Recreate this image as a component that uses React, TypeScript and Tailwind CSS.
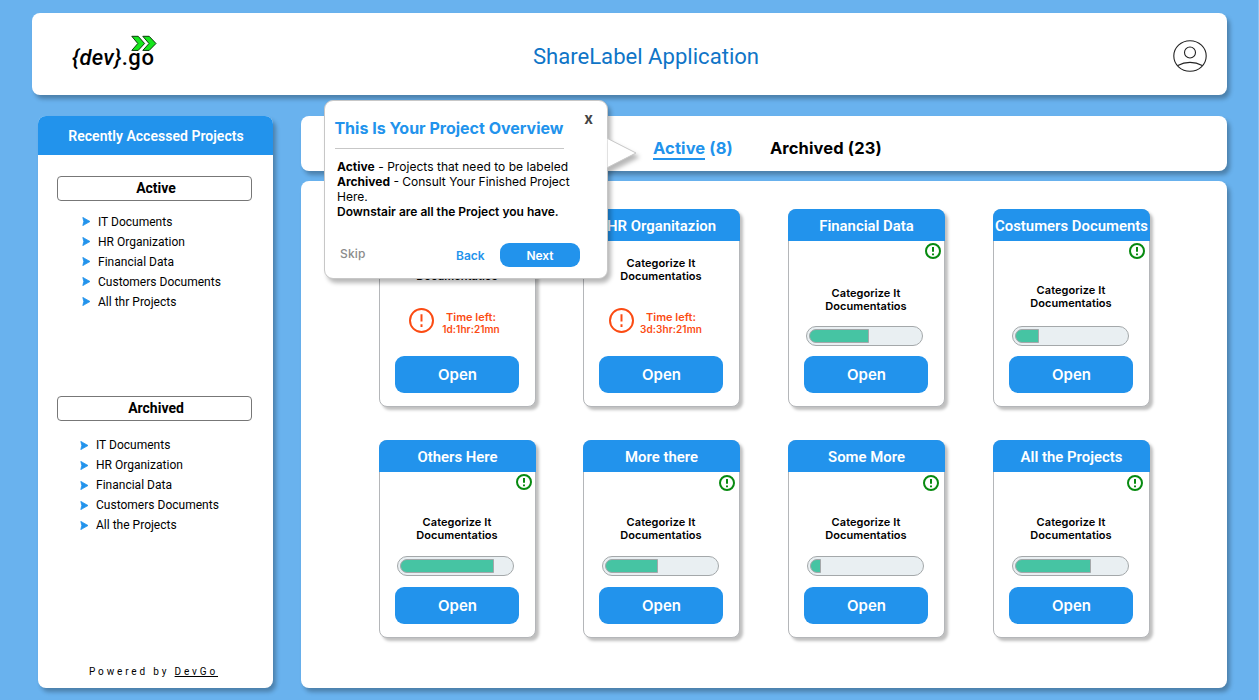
import type { ReactNode } from "react";

type CardData = {
  title: string;
  desc: string;
  badge?: string;
  bar?: string;
  fill?: number;
  timeLeft?: string;
  time?: string;
};

const CARDS: CardData[] = [
  { title: "IT Documents", desc: "mt-4", timeLeft: "1d:1hr:21mn", time: "pl-[29px]" },
  { title: "HR Organitazion", desc: "mt-4", timeLeft: "3d:3hr:21mn", time: "pl-[25px]" },
  { title: "Financial Data", badge: "mt-[2px] mr-[3px]", desc: "mt-[28px] h-[39px]", bar: "ml-[17px]", fill: 60 },
  { title: "Costumers Documents", badge: "mt-[2px] mr-[4px]", desc: "mt-[25px] h-[42px]", bar: "ml-[18px]", fill: 24 },
  { title: "Others Here", badge: "mt-[2px] mr-[3px]", desc: "mt-[26px] h-[40px]", bar: "ml-[17px]", fill: 94 },
  { title: "More there", badge: "mt-[3px] mr-[4px]", desc: "mt-[25px] h-[40px]", bar: "ml-[18px]", fill: 53 },
  { title: "Some More", badge: "mt-[3px] mr-[5px]", desc: "mt-[25px] h-[40px]", bar: "ml-[18px]", fill: 11 },
  { title: "All the Projects", badge: "mt-[3px] mr-[6px]", desc: "mt-[25px] h-[40px]", bar: "ml-[18px]", fill: 76 },
];

function Logo() {
  return (
    <div className="relative h-[42px] w-[90px]">
      <span className="absolute top-[13px] left-0 text-[22px] leading-[24px] font-medium whitespace-nowrap text-black">
        <i className="tracking-[0.3px]">{"{dev}"}</i>
        <span className="tracking-[0.6px]">.go</span>
      </span>
      <svg className="absolute top-[2px] left-[59px]" width="27" height="17" viewBox="0 0 27 17">
        <g fill="#16e51d" stroke="#0c3a0c" strokeWidth="1">
          <path d="M.8 1.3H7.2L13.6 8.5 7.2 15.4H.8L6.8 8.5Z" />
          <path d="M11.8 1.3H18.2L25 8.5 18.2 15.4H11.8L18 8.5Z" />
        </g>
      </svg>
    </div>
  );
}

function UserIcon() {
  return (
    <svg width="34" height="34" viewBox="0 0 34 34" fill="none" stroke="#222" strokeWidth="1.1">
      <ellipse cx="17" cy="17" rx="16.2" ry="15.3" />
      <circle cx="17" cy="13.5" r="5.5" />
      <path d="M4.8 26.6Q10.5 23.4 17 23.4T29.2 26.6" />
    </svg>
  );
}

function ProjectList({ title, items, className, arrow }: { title: string; items: string[]; className: string; arrow: string }) {
  return (
    <>
      <h3 className="ml-[19px] flex h-[25px] w-[195px] items-center justify-center rounded-[4px] border border-[#777] pl-[3px] text-[14px] font-bold">
        {title}
      </h3>
      <ul className={className}>
        {items.map((item) => (
          <li key={item} className="flex h-5 items-center gap-[7px] text-[12px] tracking-[0.01px]">
            <svg className={arrow} width="9" height="9" viewBox="0 0 9 9">
              <path d="M.8.4 8 4.5.8 8.6 1.8 4.5Z" fill="#2293ec" stroke="#2293ec" strokeWidth=".8" />
            </svg>
            <span>{item}</span>
          </li>
        ))}
      </ul>
    </>
  );
}

function Alert({ size, color, stroke }: { size: number; color: string; stroke: number }) {
  return (
    <svg className="shrink-0" width={size} height={size} viewBox="0 0 24 24" fill="none" stroke={color} strokeWidth={stroke}>
      <circle cx="12" cy="12" r={12 - stroke / 2} />
      <path d="M12 6v7M12 15.7v2.5" />
    </svg>
  );
}

function Card({ card }: { card: CardData }) {
  return (
    <article className="flex h-[198px] w-[157px] flex-col rounded-[8px] border border-[#b4b6b9] bg-white shadow-[3px_3px_3px_rgba(0,0,0,0.25)]">
      <h2 className="-mx-px -mt-px flex h-8 shrink-0 items-center justify-center rounded-t-[8px] bg-[#2293ec] pt-[2px] font-[Roboto,sans-serif] text-[14.9px] font-semibold whitespace-nowrap text-white">
        {card.title}
      </h2>
      <div className="flex h-[115px] flex-col">
        {card.badge && (
          <div className={`flex h-4 shrink-0 justify-end ${card.badge}`}>
            <Alert size={16} color="#078a10" stroke={3} />
          </div>
        )}
        <p className={`shrink-0 pr-px text-center text-[11px] leading-[13px] font-semibold tracking-[0.06px] ${card.desc}`}>
          Categorize It
          <br />
          Documentatios
        </p>
        {card.timeLeft && (
          <div className={`mt-[23px] flex items-center text-[#fb4b13] ${card.time}`}>
            <Alert size={25} color="#fb4b13" stroke={1.9} />
            <div className="-mr-2 w-[74px] pt-[5px] text-center font-semibold">
              <div className="text-[11px] leading-[12px]">Time left:</div>
              <div className="text-[10px] leading-[12px] tracking-[0.08px]">{card.timeLeft}</div>
            </div>
          </div>
        )}
        {card.fill !== undefined && (
          <div className={`h-5 w-[117px] shrink-0 rounded-full border border-[#a4a8aa] bg-[#e9eff2] p-[2px] ${card.bar}`}>
            <div className="h-[14px] rounded-l-full border border-[#a4a8aa] bg-[#46c4a3]" style={{ width: `${card.fill}px` }} />
          </div>
        )}
      </div>
      <button className="ml-[15px] flex h-[37px] w-[124px] shrink-0 items-center justify-center rounded-[9px] bg-[#2293ec] pt-[2px] pl-px text-[15px] font-semibold text-white">
        Open
      </button>
    </article>
  );
}

function Panel({ className, children }: { className: string; children: ReactNode }) {
  return <div className={`rounded-[8px] bg-white shadow-[3px_4px_4px_rgba(0,0,0,0.28)] ${className}`}>{children}</div>;
}

function Tour() {
  return (
    <section className="absolute top-[100px] left-[324px] h-[179px] w-[284px] rounded-[9px] border border-[#c7c7c7] bg-white pl-[10px] shadow-[3px_4px_4px_rgba(0,0,0,0.28)]">
      <svg className="absolute top-[36px] left-[281px] drop-shadow-[3px_4px_2px_rgba(0,0,0,0.28)]" width="32" height="32" viewBox="0 0 32 32">
        <path d="M1.5 1.5 30 16 1.5 30.5" fill="#fff" stroke="#c7c7c7" />
      </svg>
      <div className="flex justify-between">
        <h2 className="mt-[17px] w-[229px] border-b border-[#c7c7c7] pb-[10px] -indent-[0.6px] text-[16px] leading-[20px] font-bold whitespace-nowrap text-[#2293ec]">
          This Is Your Project Overview
        </h2>
        <button className="mt-[9px] mr-[14px] h-[18px] text-[15px] leading-[18px] font-bold text-[#444]">x</button>
      </div>
      <p className="mt-[10px] ml-[2px] w-[245px] text-[12px] leading-[15px]">
        <span className="tracking-[0.04px]">
          <b>Active</b> - Projects that need to be labeled
        </span>
        <br />
        <b>Archived</b> - Consult Your Finished Project Here.
        <br />
        <span className="font-semibold">Downstair are all the Project you have.</span>
      </p>
      <div className="mt-[24px] flex h-6 items-center text-[12px] font-medium">
        <button className="mb-[2px] ml-[5px] w-[116px] text-left tracking-[0.2px] text-[#8b8b8b]">Skip</button>
        <button className="w-[44px] pt-[2px] text-left font-semibold text-[#2293ec]">Back</button>
        <button className="h-6 w-20 rounded-[9px] bg-[#2293ec] pt-px font-semibold text-white">Next</button>
      </div>
    </section>
  );
}

export default function App() {
  return (
    <div className="relative h-[700px] w-[1259px] overflow-hidden border-r border-[#8cc4f2] bg-[#69b2ee] pt-[13px] font-[Inter,sans-serif] text-black">
      <Panel className="ml-8 flex h-[82px] w-[1195px] items-center justify-between pr-5 pl-10 font-[Roboto,sans-serif]">
        <div className="w-[180px]">
          <Logo />
        </div>
        <h1 className="pt-[6px] pl-[13px] text-[22.1px] text-[#0f75c7]">ShareLabel Application</h1>
        <div className="flex w-[180px] justify-end pt-1">
          <UserIcon />
        </div>
      </Panel>

      <div className="mt-[21px] ml-[38px] flex gap-7">
        <Panel className="flex h-[572px] w-[235px] flex-col font-[Roboto,sans-serif]">
          <h2 className="mb-[21px] flex h-[39px] items-center justify-center rounded-t-[8px] bg-[#2293ec] pt-[2px] pl-px text-[14px] font-semibold tracking-[0.03px] text-white">
            Recently Accessed Projects
          </h2>
          <ProjectList
            title="Active"
            className="mt-[11px] mb-[84px] pl-[44px]"
            arrow="mb-px"
            items={["IT Documents", "HR Organization", "Financial Data", "Customers Documents", "All thr Projects"]}
          />
          <ProjectList
            title="Archived"
            className="mt-[14px] pl-[42px]"
            arrow="mt-px"
            items={["IT Documents", "HR Organization", "Financial Data", "Customers Documents", "All the Projects"]}
          />
          <p className="mt-auto mb-[9px] pl-[51px] text-[10px] leading-[15px] tracking-[2.85px]">
            Powered by <span className="underline">DevGo</span>
          </p>
        </Panel>

        <main className="flex flex-col gap-[10px]">
          <Panel className="flex h-[55px] w-[926px] items-center gap-[37px] pt-2 pl-[352px] text-[16.5px] leading-[22px] font-bold tracking-[0.12px]">
            <span className="text-[#2293ec]">
              <span className="border-b-2 border-[#2293ec]">Active</span> (8)
            </span>
            <span>Archived (23)</span>
          </Panel>
          <Panel className="h-[507px] w-[926px] pt-7 pl-[78px]">
            <div className="grid grid-cols-[204px_205px_205px_157px] gap-y-[33px]">
              {CARDS.map((card) => (
                <Card key={card.title} card={card} />
              ))}
            </div>
          </Panel>
        </main>
      </div>

      <Tour />
    </div>
  );
}
